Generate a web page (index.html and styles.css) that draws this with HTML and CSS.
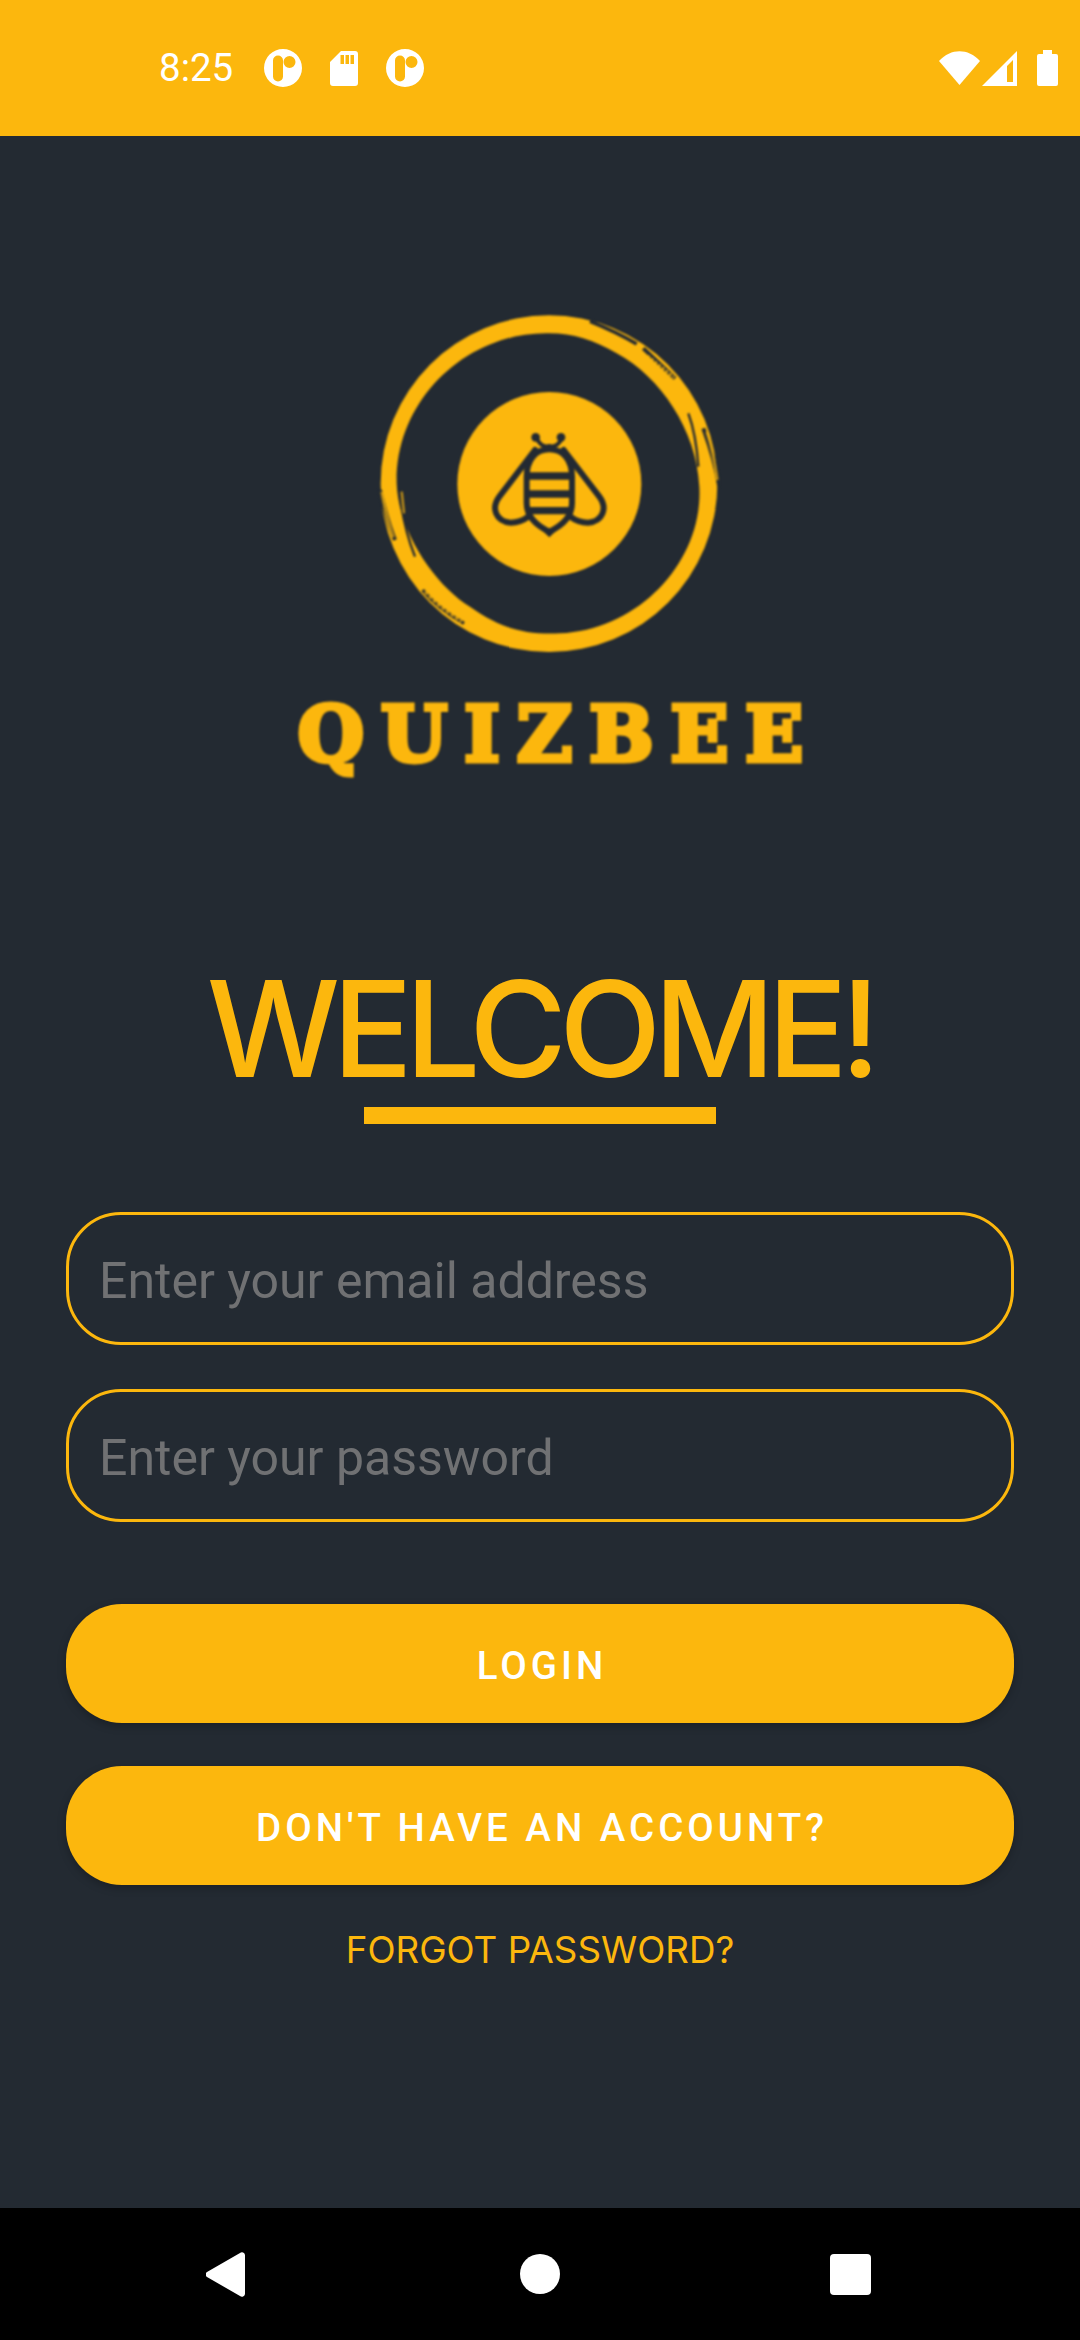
FILE: index.html
```html
<!DOCTYPE html>
<html lang="en">
<head>
<meta charset="utf-8">
<title>QuizBee</title>
<link rel="stylesheet" href="styles.css">
</head>
<body>
<div class="screen">
  <header class="statusbar">
    <span class="time">8:25</span>
    <svg class="ic-pill" viewBox="0 0 38 38"><path fill="#fff" fill-rule="evenodd" d="M19 0a19 19 0 1 1 0 38a19 19 0 1 1 0-38zM14 6.500a5 5 0 0 0-5 5v16a5 5 0 0 0 10 0v-16a5 5 0 0 0-5-5zM25.500 7a6 6 0 1 0 0 12a6 6 0 1 0 0-12z"/></svg>
    <svg class="ic-sd" viewBox="0 0 28 35"><path fill="#fff" fill-rule="evenodd" d="M11 0H25a3 3 0 0 1 3 3V32a3 3 0 0 1-3 3H3a3 3 0 0 1-3-3V11zM10.500 4v9h3.500V4zM15.500 4v9h3.500V4zM20.500 4v9h3.500V4z"/></svg>
    <svg class="ic-pill" viewBox="0 0 38 38"><path fill="#fff" fill-rule="evenodd" d="M19 0a19 19 0 1 1 0 38a19 19 0 1 1 0-38zM14 6.500a5 5 0 0 0-5 5v16a5 5 0 0 0 10 0v-16a5 5 0 0 0-5-5zM25.500 7a6 6 0 1 0 0 12a6 6 0 1 0 0-12z"/></svg>
    <span class="spacer"></span>
    <svg class="ic-wifi" viewBox="0 0 41 34"><path fill="#fff" d="M0 10C12-3 29-3 41 10L20.500 34z"/></svg>
    <svg class="ic-signal" viewBox="0 0 35 35"><path fill="#fff" fill-rule="evenodd" d="M35 0V35H0zM31 9 25 15V31H31z"/></svg>
    <svg class="ic-battery" viewBox="0 0 21 36"><path fill="#fff" d="M6 0H15V4H19a2 2 0 0 1 2 2V34a2 2 0 0 1-2 2H2a2 2 0 0 1-2-2V6a2 2 0 0 1 2-2H6z"/></svg>
  </header>

  <main class="content">
    <svg class="logo" viewBox="0 0 1080 1080">
      <g fill="#fcb70d">
        <path fill-rule="evenodd" d="M567 46a505 505 0 1 1 0 1010a505 505 0 1 1 0-1010zM567 100C320 95 105 300 110 550C115 700 230 860 330 920C420 985 500 1005 600 1000C840 990 1030 780 1018 560C1010 390 900 230 770 160C700 120 640 100 567 100z"/>
        <circle cx="568" cy="552" r="276"/>
      </g>
      <g fill="none" stroke="#232a32" stroke-linecap="butt">
        <path d="M690 64 C740 84 790 108 830 132" stroke-width="10"/>
        <path d="M850 145 L945 235" stroke-width="12"/>
        <path d="M985 340 C1000 380 1010 430 1015 500" stroke-width="7"/>
        <path d="M1030 385 C1050 440 1068 500 1078 560" stroke-width="12"/>
        <path d="M60 570 C72 620 88 680 105 720" stroke-width="12"/>
        <path d="M118 575 C128 660 145 720 165 770" stroke-width="7"/>
        <path d="M188 870 C220 910 260 940 312 970" stroke-width="10"/>
      </g>
      <g fill="none" stroke="#fcb70d" stroke-opacity=".75">
        <path d="M862 168 L942 232" stroke-width="10" stroke-dasharray="9 5"/>
        <path d="M1040 395 C1055 440 1065 490 1072 540" stroke-width="8"/>
        <path d="M65 575 C75 630 85 670 100 712" stroke-width="8"/>
        <path d="M125 575 L132 640" stroke-width="7"/>
        <path d="M195 875 C225 910 260 935 305 965" stroke-width="8" stroke-dasharray="12 5"/>
      </g>
      <g fill="none" stroke="#232a32" stroke-width="18" stroke-linejoin="round" stroke-linecap="round">
        <path d="M530 415 Q 545 445 568 438 Q 590 445 606 415" stroke-width="12"/>
        <path d="M525 450 L418 590 C392 625 408 665 452 668 C475 668 492 660 505 650"/>
        <path d="M611 450 L718 590 C744 625 728 665 684 668 C661 668 644 660 631 650"/>
        <path d="M568 448 C610 448 636 480 636 530 V610 C636 650 610 675 568 695 C526 675 500 650 500 610 V530 C500 480 526 448 568 448 Z"/>
        <path d="M500 528 H636M500 582 H636M500 632 H636" stroke-linecap="butt" stroke-width="22"/>
      </g>
      <g fill="#232a32">
        <circle cx="527" cy="412" r="13"/>
        <circle cx="603" cy="412" r="13"/>
        <path d="M545 690 H591 L568 712 Z"/>
      </g>
    </svg>
    <div class="wordmark">QUIZBEE</div>

    <h1 class="title">WELCOME!</h1>
    <div class="rule"></div>

    <form class="form">
      <div class="field">Enter your email address</div>
      <div class="field">Enter your password</div>
      <button type="button" class="btn btn-login">LOGIN</button>
      <button type="button" class="btn btn-signup">DON'T HAVE AN ACCOUNT?</button>
      <a class="forgot">FORGOT PASSWORD?</a>
    </form>
  </main>

  <nav class="navbar">
    <svg class="nav-back" viewBox="0 0 39 45"><path fill="#fff" d="M1 20 34 1a3 3 0 0 1 5 2V42a3 3 0 0 1-5 2L1 25a3 3 0 0 1 0-5z"/></svg>
    <span class="nav-home"></span>
    <span class="nav-recent"></span>
  </nav>
</div>
</body>
</html>
```
FILE: styles.css
```css
* { box-sizing: border-box; }
html, body { margin: 0; padding: 0; }
body { width: 1080px; height: 2340px; overflow: hidden; font-family: Roboto, "Liberation Sans", sans-serif; background: #232a32; }
.screen { display: flex; flex-direction: column; height: 2340px; }

.statusbar { height: 136px; flex: none; background: #fcb70d; display: flex; align-items: center; padding: 0 22px 0 159px; }
.time { color: #fff; font-size: 38.500px; line-height: 1; width: 105px; }
.ic-pill { width: 38px; height: 38px; }
.ic-sd { width: 28px; height: 35px; margin: 0 28px 0 28px; }
.spacer { flex: 1; }
.ic-wifi { width: 41px; height: 34px; }
.ic-signal { width: 35px; height: 35px; margin-left: 2px; }
.ic-battery { width: 21px; height: 36px; margin-left: 20px; }

.content { flex: 1; padding: 164px 66px 0; display: flex; flex-direction: column; align-items: center; }
.logo { width: 360px; height: 360px; flex: none; filter: blur(1px); }
.wordmark { margin: 30px 0 0 38px; height: 90px; font-family: "DejaVu Serif", serif; font-weight: 700; font-size: 76px; line-height: 90px; letter-spacing: 17px; color: #fcb70d; -webkit-text-stroke: 5px #fcb70d; filter: blur(0.9px); white-space: nowrap; }
.title { margin: 179px 0 0; font-family: Inter, "Liberation Sans", sans-serif; font-weight: 500; font-size: 133px; line-height: 140px; letter-spacing: -7.500px; color: #fcb70d; white-space: nowrap; }
.rule { width: 352px; height: 17px; background: #fcb70d; margin-top: 8px; flex: none; }

.form { width: 100%; display: flex; flex-direction: column; margin-top: 88px; }
.field { height: 133px; border: 3px solid #fcb70d; border-radius: 55px; padding: 4px 0 0 30px; display: flex; align-items: center; font-size: 50px; color: #707173; margin-bottom: 44px; }
.field + .field { margin-bottom: 82px; }
.btn { height: 119px; border: 0; border-radius: 56px; background: #fcb70d; color: #fff; font-family: Roboto, sans-serif; font-weight: 500; font-size: 38.500px; letter-spacing: 4px; box-shadow: 0 3px 8px rgba(0,0,0,.25); padding: 4px 0 0 4px; margin-bottom: 43px; }
.forgot { align-self: center; font-family: Inter, Roboto, sans-serif; font-size: 36.750px; line-height: 44px; color: #fcb70d; }

.navbar { height: 132px; flex: none; background: #000; display: flex; align-items: center; justify-content: space-between; padding: 0 209px 0 206px; }
.nav-back { width: 39px; height: 45px; }
.nav-home { width: 40px; height: 40px; margin-left: 5px; border-radius: 50%; background: #fff; }
.nav-recent { width: 41px; height: 41px; border-radius: 4px; background: #fff; }
```
